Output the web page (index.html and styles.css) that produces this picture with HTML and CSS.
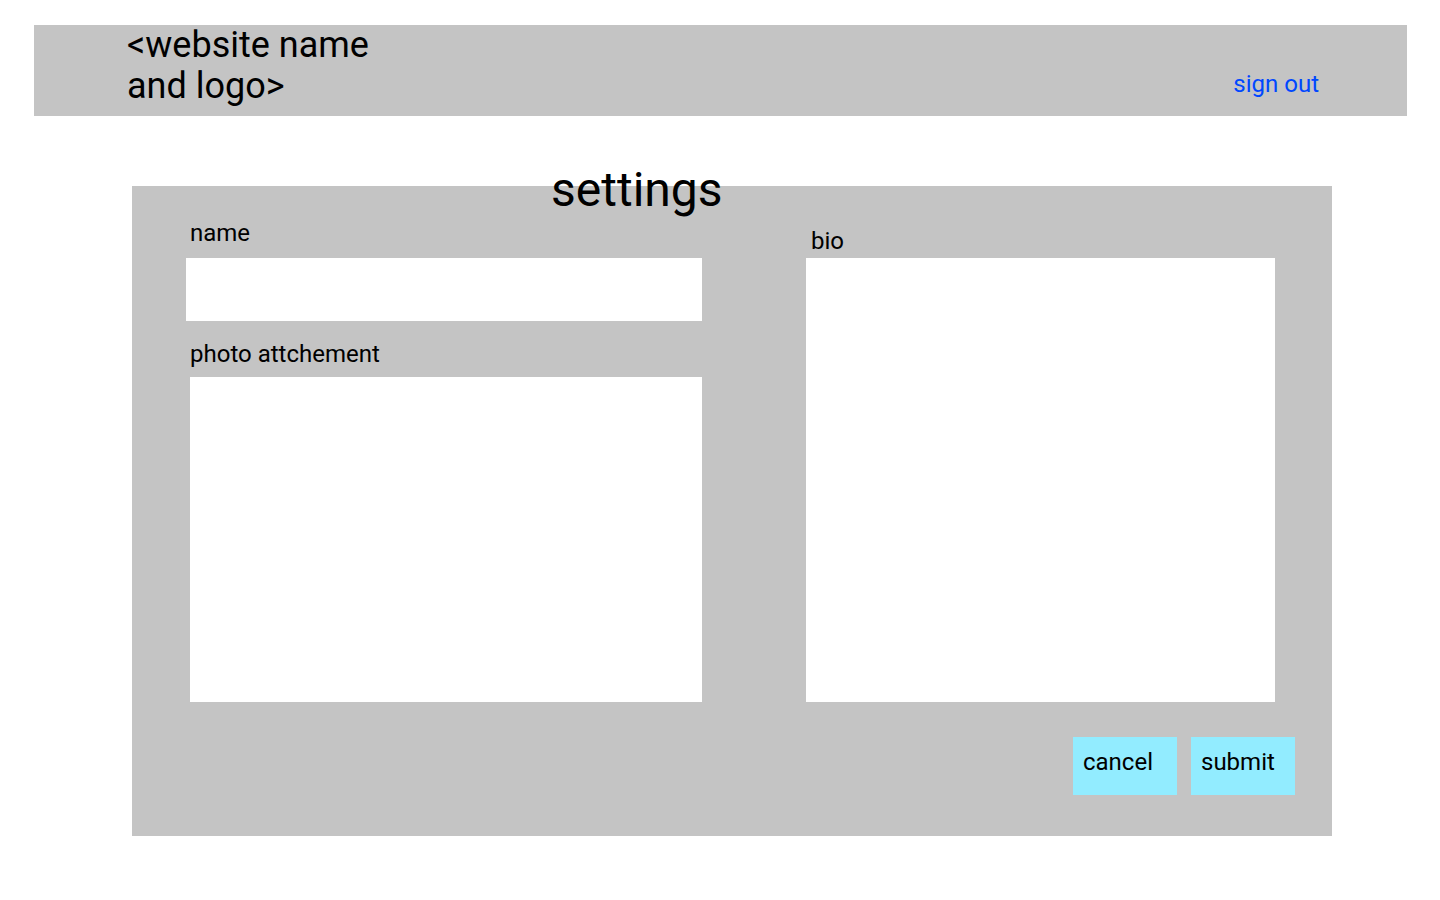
FILE: index.html
```html
<!DOCTYPE html>
<html lang="en">
<head>
<meta charset="utf-8">
<title>settings</title>
<link rel="stylesheet" href="styles.css">
</head>
<body>
<header class="topbar">
  <div class="brand">&lt;website name and logo&gt;</div>
  <a class="signout" href="#">sign out</a>
</header>
<main class="panel">
  <h1 class="title">settings</h1>
  <div class="columns">
    <div class="col-left">
      <label class="label label-name">name</label>
      <div class="name-input"></div>
      <label class="label label-photo">photo attchement</label>
      <div class="photo-box"></div>
    </div>
    <div class="col-right">
      <label class="label label-bio">bio</label>
      <div class="bio-box"></div>
    </div>
  </div>
  <div class="actions">
    <button class="btn" type="button">cancel</button>
    <button class="btn" type="button">submit</button>
  </div>
</main>
</body>
</html>
```
FILE: styles.css
```css
* { box-sizing: border-box; }
body {
  margin: 0;
  font-family: Roboto, "Liberation Sans", sans-serif;
  color: #000;
  background: #fff;
}
.topbar {
  margin: 25px 33px 0 34px;
  height: 91px;
  background: #c4c4c4;
  display: flex;
  justify-content: space-between;
  padding: 0 88px 18px 93px;
}
.brand {
  width: 260px;
  font-size: 36px;
  line-height: 41px;
}
.signout {
  align-self: flex-end;
  font-size: 24px;
  line-height: 28px;
  color: #0047ff;
  text-decoration: none;
}
.panel {
  margin: 70px 0 0 132px;
  width: 1200px;
  height: 650px;
  background: #c4c4c4;
  padding-left: 54px;
  display: flex;
  flex-direction: column;
}
.title {
  margin: -24px 0 0 365px;
  font-size: 48px;
  line-height: 56px;
  font-weight: 400;
}
.columns {
  display: flex;
  gap: 104px;
}
.col-left {
  width: 516px;
  display: flex;
  flex-direction: column;
}
.col-right {
  width: 469px;
  display: flex;
  flex-direction: column;
}
.label {
  font-size: 24px;
  line-height: 28px;
}
.label-name { margin: 1px 0 0 4px; }
.name-input {
  margin-top: 11px;
  height: 63px;
  background: #fff;
}
.label-photo { margin: 19px 0 0 4px; }
.photo-box {
  margin: 9px 0 0 4px;
  height: 325px;
  background: #fff;
}
.label-bio { margin: 9px 0 0 5px; }
.bio-box {
  margin-top: 3px;
  height: 444px;
  background: #fff;
}
.actions {
  display: flex;
  justify-content: flex-end;
  gap: 14px;
  margin-top: 35px;
  padding-right: 37px;
}
.btn {
  width: 104px;
  height: 58px;
  border: 0;
  background: #92ecff;
  font-family: inherit;
  font-size: 24px;
  line-height: 28px;
  color: #000;
  text-align: left;
  padding: 11px 0 0 10px;
  display: flex;
  align-items: flex-start;
}
```
